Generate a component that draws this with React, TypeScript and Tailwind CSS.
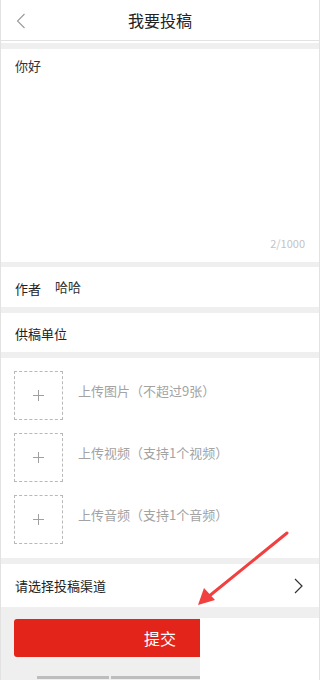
import React from 'react';

const font = { fontFamily: '"Noto Sans CJK SC", "Noto Sans", sans-serif' };

const uploads = ['上传图片（不超过9张）', '上传视频（支持1个视频）', '上传音频（支持1个音频）'];

const Band = ({ h }: { h: string }) => <div className={`${h} bg-[#efefef]`} />;

export default function App() {
  return (
    <div style={font} className="relative w-[320px] h-[680px] overflow-hidden bg-[#efefef] border-x border-[#e2e2e2]">
      {/* header */}
      <div className="bg-white">
        <div className="relative h-[41px] flex items-center justify-center border-b border-[#e2e2e2]">
          <svg className="absolute left-[15px] top-[13px]" width="10" height="16" viewBox="0 0 10 16">
            <path d="M8.5 1 L1.5 8 L8.5 15" fill="none" stroke="#9a9a9a" strokeWidth="1.1" />
          </svg>
          <span className="text-[16px] text-[#222]">我要投稿</span>
        </div>
        <div className="h-[2px]" />
      </div>
      <Band h="h-[6px]" />

      {/* content */}
      <div className="h-[213px] bg-white flex flex-col justify-between px-[14px] pt-[8px] pb-[12px]">
        <div className="text-[13px] leading-[18px] text-[#333]">你好</div>
        <div className="text-right text-[11px] leading-[14px] text-[#c4c4c4]">2/1000</div>
      </div>
      <Band h="h-[5px]" />

      <div className="h-[40px] bg-white flex items-center px-[14px]">
        <span className="text-[13px] text-[#222] mt-[3px]">作者</span>
        <span className="text-[13px] text-[#333] ml-[14px]">哈哈</span>
      </div>
      <Band h="h-[6px]" />

      <div className="h-[39px] bg-white flex items-center px-[14px]">
        <span className="text-[13px] text-[#222] mt-[3px]">供稿单位</span>
      </div>
      <Band h="h-[6px]" />

      {/* uploads */}
      <div className="bg-white px-[13px] pt-[13px] pb-[14px] flex flex-col gap-[13px]">
        {uploads.map((t) => (
          <div key={t} className="flex items-start">
            <div className="w-[49px] h-[49px] border border-dashed border-[#b8b8b8] flex items-center justify-center shrink-0">
              <svg width="11" height="11" viewBox="0 0 11 11">
                <path d="M5.5 0 V11 M0 5.5 H11" stroke="#a0a0a0" strokeWidth="1" />
              </svg>
            </div>
            <span className="ml-[15px] pt-[11px] text-[13px] leading-[18px] text-[#a3a3a3] whitespace-nowrap">{t}</span>
          </div>
        ))}
      </div>
      <Band h="h-[6px]" />

      <div className="h-[43px] bg-white flex items-center justify-between px-[14px]">
        <span className="text-[13px] text-[#222]">请选择投稿渠道</span>
        <svg width="9" height="16" viewBox="0 0 9 16" className="mr-[2px]">
          <path d="M1 1 L8 8 L1 15" fill="none" stroke="#333" strokeWidth="1.2" />
        </svg>
      </div>

      <div className="px-[13px] pt-[12px]">
        <button className="w-full h-[38px] rounded-[3px] bg-[#e3241a] text-white text-[16px] flex items-center justify-center">
          提交
        </button>
      </div>
      <div className="flex gap-[2px] ml-[36px] mt-[19px]">
        <div className="w-[72px] h-[3px] bg-[#bdbdbd]" />
        <div className="w-[89px] h-[3px] bg-[#bdbdbd]" />
      </div>

      {/* screenshot crop overlay */}
      <div className="absolute left-[199px] top-[618px] w-[121px] h-[62px] bg-white" />

      {/* annotation arrow */}
      <svg className="absolute left-0 top-0 pointer-events-none" width="320" height="680" viewBox="0 0 320 680">
        <line x1="286" y1="533" x2="207" y2="597" stroke="#f04040" strokeWidth="3" strokeLinecap="round" />
        <polygon points="197,605 203,588 214,600" fill="#f04040" />
      </svg>
    </div>
  );
}
